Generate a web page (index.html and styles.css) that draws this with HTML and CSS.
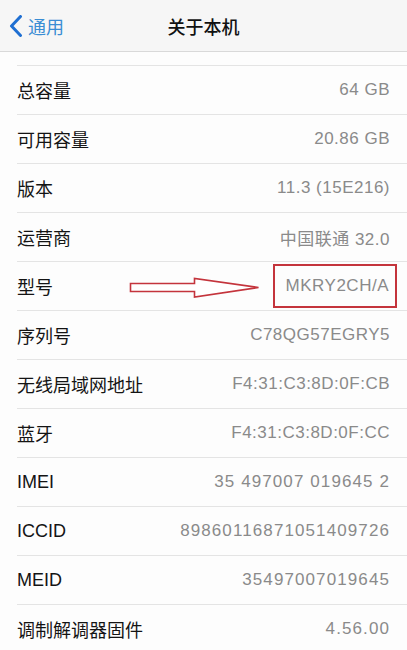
FILE: index.html
```html
<!DOCTYPE html>
<html lang="zh-CN">
<head>
  <meta charset="UTF-8">
  <meta name="viewport" content="width=device-width, initial-scale=1.0">
  <title>关于本机</title>
  <link rel="stylesheet" href="styles.css">
</head>
<body>
  <div class="nav-bar">
    <a class="back-btn" href="#">
      <svg class="chevron" width="14" height="22" viewBox="0 0 14 22">
        <path d="M11.5 1.5 L2.5 11 L11.5 20.5" fill="none" stroke="#1f6fd2" stroke-width="3" stroke-linecap="round" stroke-linejoin="round"/>
      </svg>
      <span>通用</span>
    </a>
    <h1 class="nav-title">关于本机</h1>
  </div>

  <div class="info-list">
    <div class="info-row">
      <span class="label">总容量</span>
      <span class="value">64 GB</span>
    </div>
    <div class="info-row">
      <span class="label">可用容量</span>
      <span class="value">20.86 GB</span>
    </div>
    <div class="info-row">
      <span class="label">版本</span>
      <span class="value">11.3 (15E216)</span>
    </div>
    <div class="info-row">
      <span class="label">运营商</span>
      <span class="value">中国联通 32.0</span>
    </div>
    <div class="info-row">
      <span class="label">型号</span>
      <svg class="arrow" width="132" height="22" viewBox="0 0 132 22">
        <path d="M1.5 6.5 H65.5 V1.5 L129.5 10.5 L65.5 20 V14.5 H1.5 Z" fill="#fff" stroke="#c4343c" stroke-width="1.6" stroke-linejoin="miter"/>
      </svg>
      <span class="value highlight">MKRY2CH/A</span>
    </div>
    <div class="info-row">
      <span class="label">序列号</span>
      <span class="value">C78QG57EGRY5</span>
    </div>
    <div class="info-row">
      <span class="label">无线局域网地址</span>
      <span class="value">F4:31:C3:8D:0F:CB</span>
    </div>
    <div class="info-row">
      <span class="label">蓝牙</span>
      <span class="value">F4:31:C3:8D:0F:CC</span>
    </div>
    <div class="info-row">
      <span class="label">IMEI</span>
      <span class="value num">35 497007 019645 2</span>
    </div>
    <div class="info-row">
      <span class="label">ICCID</span>
      <span class="value num">89860116871051409726</span>
    </div>
    <div class="info-row">
      <span class="label">MEID</span>
      <span class="value num">35497007019645</span>
    </div>
    <div class="info-row">
      <span class="label">调制解调器固件</span>
      <span class="value num">4.56.00</span>
    </div>
  </div>
</body>
</html>
```

FILE: styles.css
```css
body {
  font-family: "Liberation Sans", "Noto Sans CJK SC", sans-serif;
  margin: 0;
  padding: 0;
  background-color: #fdfdfd;
  color: #111;
}

.nav-bar {
  height: 51px;
  background-color: #f6f6f6;
  border-bottom: 1px solid #d9d9d9;
  display: flex;
  align-items: center;
  justify-content: center;
  position: relative;
}

.back-btn {
  position: absolute;
  left: 9px;
  top: 0;
  height: 51px;
  display: flex;
  align-items: center;
  gap: 5px;
  color: #3a8dd4;
  text-decoration: none;
  font-size: 18px;
}

.chevron {
  margin-top: 1px;
}

.nav-title {
  margin: 0;
  font-size: 18px;
  font-weight: 500;
  color: #111;
}

.info-list {
  margin-top: 13px;
  padding-left: 17px;
}

.info-row {
  height: 48px;
  border-top: 1px solid #e4e4e4;
  display: flex;
  align-items: center;
  padding-right: 17px;
}

.label {
  font-size: 18px;
  color: #141414;
}

.value {
  margin-left: auto;
  font-size: 17px;
  color: #8a8a8a;
  letter-spacing: 0.5px;
}

.value.num {
  letter-spacing: 1.1px;
}

.arrow {
  margin-left: auto;
  margin-right: 12px;
  margin-top: 3px;
}

.value.highlight {
  margin-left: 0;
  margin-right: -7px;
  height: 40px;
  padding: 0 6px 0 11px;
  display: flex;
  align-items: center;
  border: 2px solid #c4343c;
}
```
